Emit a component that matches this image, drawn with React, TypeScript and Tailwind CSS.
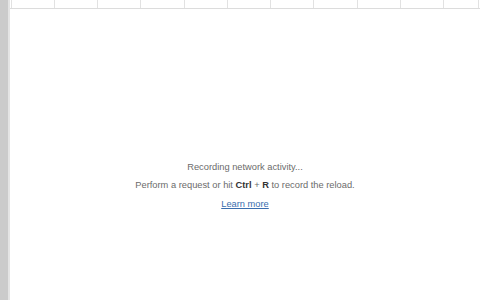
export default function App() {
  const cols = [43, 43, 43, 44, 43, 43, 43, 44, 43, 43, 35, 2];

  return (
    <div className="flex h-[300px] w-[480px] overflow-hidden bg-white font-['Liberation_Sans',Arial,sans-serif]">
      {/* left gutter */}
      <div className="h-full w-[8px] bg-[#cbcbcb]" />
      <div className="h-full w-[2px] bg-[#e4e4e4]" />

      <div className="flex min-w-0 flex-1 flex-col">
        {/* table stub */}
        <div className="flex h-[9px] border-b border-[#dcdcdc]">
          <div className="w-[1px] bg-white" />
          {cols.map((w, i) => (
            <div key={i} style={{ width: w }} className="shrink-0 border-l border-[#e2e2e2]" />
          ))}
        </div>

        {/* empty state */}
        <div className="flex flex-1 flex-col items-center pt-[149px] text-[9.3px] text-[#6b6b6b]">
          <p className="leading-[18px]">Recording network activity...</p>
          <p className="leading-[18px]">
            Perform a request or hit <b className="text-[#333]">Ctrl</b> + <b className="text-[#333]">R</b> to record the reload.
          </p>
          <a href="#" className="mt-[1px] leading-[18px] text-[#3a6eae] underline">
            Learn more
          </a>
        </div>
      </div>
    </div>
  );
}
